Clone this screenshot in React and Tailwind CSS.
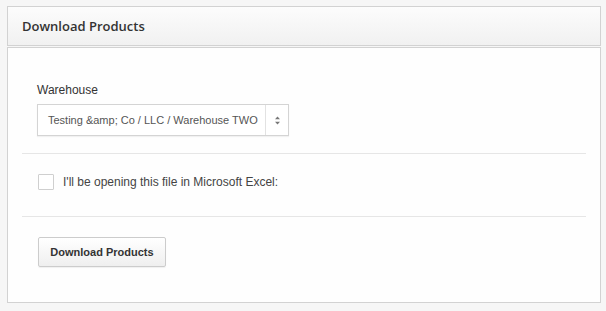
import React, { useState } from 'react';

const App = () => {
  const [excel, setExcel] = useState(false);

  return (
    <div className="w-[606px] h-[311px] bg-[#f6f6f6] pt-[6px] pl-[7px] pr-[5px]" style={{ fontFamily: '"Liberation Sans", Arial, sans-serif' }}>
      {/* Panel header */}
      <div className="h-[40px] border border-[#d2d2d2] bg-gradient-to-b from-[#fcfcfc] to-[#f1f1f1] flex items-center pl-[14px]">
        <h3 className="text-[13px] font-semibold text-[#333] leading-none" style={{ fontFamily: '"Open Sans", sans-serif' }}>
          Download Products
        </h3>
      </div>

      {/* Panel body */}
      <div className="mt-[1px] h-[256px] border border-[#d2d2d2] bg-[#fefefe] px-[14px]">
        <div className="pt-[33px] pl-[15px] pb-[17px] border-b border-[#e6e6e6]">
          <label className="block text-[12px] leading-[19px] text-[#333]">Warehouse</label>
          <div className="mt-[4px] w-[252px] h-[32px] border border-[#d4d4d4] bg-white flex shadow-[0_1px_1px_rgba(0,0,0,0.05)]">
            <div className="flex-1 min-w-0 flex items-center pl-[10px] text-[11px] text-[#555] whitespace-nowrap overflow-hidden">
              Testing &amp;amp; Co / LLC / Warehouse TWO
            </div>
            <div className="w-[23px] shrink-0 border-l border-[#e2e2e2] flex items-center justify-center">
              <svg width="7" height="11" viewBox="0 0 7 11">
                <path d="M3.5 1.5 L6 4.2 L1 4.2 Z" fill="#777" />
                <path d="M3.5 9.5 L6 6.8 L1 6.8 Z" fill="#777" />
              </svg>
            </div>
          </div>
        </div>

        <div className="pt-[20px] pb-[26px] pl-[16px] border-b border-[#e6e6e6] flex items-center">
          <button
            onClick={() => setExcel(!excel)}
            className="w-[16px] h-[16px] border border-[#cfcfcf] bg-white rounded-[1px] flex items-center justify-center"
          >
            {excel && <span className="text-[11px] text-[#333] leading-none">✓</span>}
          </button>
          <span className="ml-[9px] text-[12px] text-[#444] leading-[16px]">I'll be opening this file in Microsoft Excel:</span>
        </div>

        <div className="pt-[20px] pl-[16px]">
          <button className="w-[128px] h-[30px] border border-[#cccccc] rounded-[2px] bg-gradient-to-b from-white to-[#efefef] text-[11px] font-bold text-[#333] shadow-[0_1px_1px_rgba(0,0,0,0.06)]">
            Download Products
          </button>
        </div>
      </div>
    </div>
  );
};

export default App;
